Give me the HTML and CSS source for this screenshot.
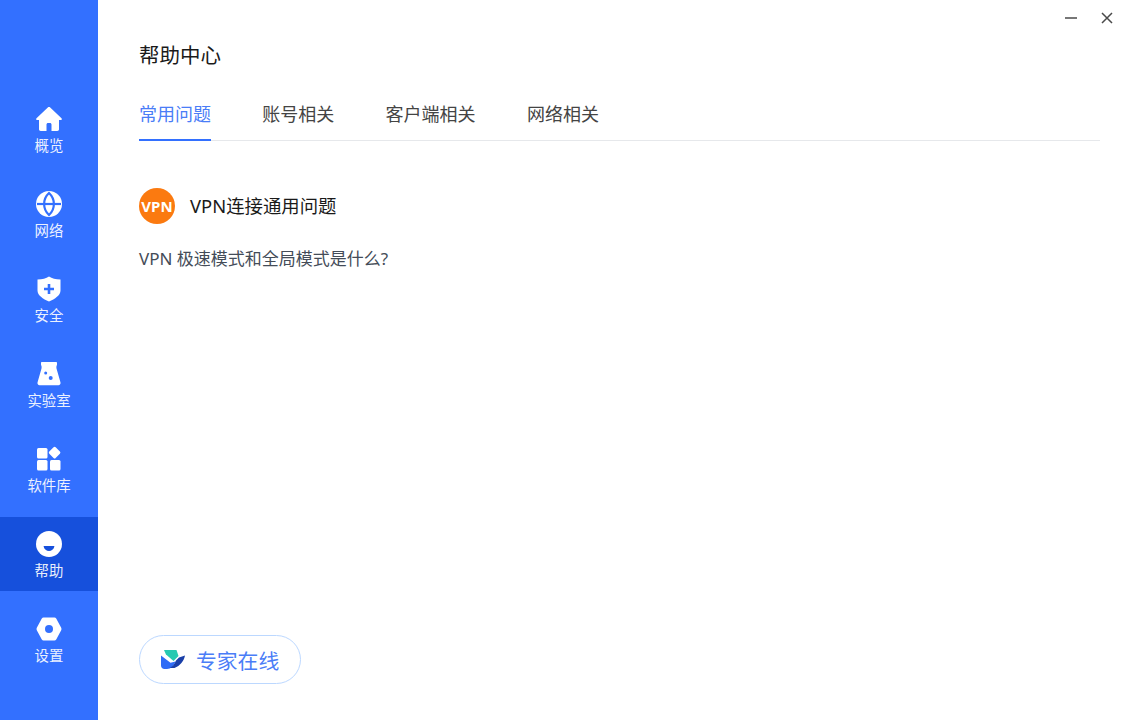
FILE: index.html
```html
<!DOCTYPE html>
<html lang="zh-CN">
<head>
<meta charset="utf-8">
<title>帮助中心</title>
<link rel="stylesheet" href="styles.css">
</head>
<body>
<div class="app">
  <nav class="sidebar">
    <a class="nav-item">
      <svg class="nav-icon" viewBox="0 0 26 26"><path d="M11.800 1.500c.7-.6 1.700-.6 2.400 0l11.300 10.700c.7.700.3 1.800-.7 1.800H23v9.300c0 1-.8 1.700-1.700 1.700H15.500v-6.500c0-.8-.7-1.500-1.500-1.500h-2c-.8 0-1.500.7-1.500 1.500V25H4.700C3.800 25 3 24.300 3 23.300V14H1.200c-1 0-1.400-1.100-.7-1.800z"/></svg>
      <span>概览</span>
    </a>
    <a class="nav-item">
      <svg class="nav-icon" viewBox="0 0 26 26"><circle cx="13" cy="13" r="13"/><g class="cut-stroke"><path d="M1 13h24"/><path d="M13 2C6.500 8 6.500 18 13 24C19.500 18 19.500 8 13 2z"/></g></svg>
      <span>网络</span>
    </a>
    <a class="nav-item">
      <svg class="nav-icon" viewBox="0 0 26 26"><path d="M13 .5C16 2.500 19.500 3.300 24.500 3.500v11c0 4.800-5.500 8.500-11.500 11-6-2.500-11.500-6.200-11.500-11v-11C6.500 3.300 10 2.500 13 .5z"/><path class="cut-fill" d="M11.700 8h2.600v3.700H18v2.600h-3.700V18h-2.600v-3.700H8v-2.600h3.700z"/></svg>
      <span>安全</span>
    </a>
    <a class="nav-item">
      <svg class="nav-icon" viewBox="0 0 26 26"><path d="M6 1h14c.6 0 1 .4 1 1v1.500c0 .5-.2.900-.4 1.200-.3.700-.3 1.600-.1 2.700L24.500 21.500c.3 1.400-.6 2.700-2 2.700H3.500c-1.400 0-2.300-1.300-2-2.700L5.500 7.400c.2-1.100.2-2-.1-2.700C5.200 4.400 5 4 5 3.500V2c0-.6.400-1 1-1z"/><circle class="cut-fill" cx="9.700" cy="12" r="1.500"/><circle class="cut-fill" cx="14.700" cy="17" r="2"/></svg>
      <span>实验室</span>
    </a>
    <a class="nav-item">
      <svg class="nav-icon" viewBox="0 0 26 26"><rect x="1" y="2" width="10.500" height="10.500" rx="1.500"/><rect x="1" y="14" width="10.500" height="10.500" rx="1.500"/><rect x="14" y="14" width="10.500" height="10.500" rx="1.500"/><rect x="14.100" y="2.100" width="9" height="9" rx="1.500" transform="rotate(45 18.600 6.600)"/></svg>
      <span>软件库</span>
    </a>
    <a class="nav-item active">
      <svg class="nav-icon" viewBox="0 0 26 26"><circle cx="13" cy="13" r="13"/><path class="cut-active" d="M8 15h10c.3 0 .5.200.4.500C17.700 18.300 15.500 20 13 20s-4.700-1.700-5.400-4.500c-.1-.3.100-.5.400-.5z"/></svg>
      <span>帮助</span>
    </a>
    <a class="nav-item">
      <svg class="nav-icon" viewBox="0 0 26 26"><path d="M7.500 1.500h11c.7 0 1.300.4 1.700 1l5 9.200c.4.800.4 1.700 0 2.600l-5 9.200c-.4.600-1 1-1.700 1h-11c-.7 0-1.300-.4-1.700-1l-5-9.200c-.4-.9-.4-1.800 0-2.600l5-9.200c.4-.6 1-1 1.700-1z"/><circle class="cut-fill" cx="13" cy="13" r="4"/></svg>
      <span>设置</span>
    </a>
  </nav>

  <main class="content">
    <div class="window-controls">
      <svg class="win-icon" viewBox="0 0 12 12"><path d="M0 6h12"/></svg>
      <svg class="win-icon" viewBox="0 0 12 12"><path d="M1 1l10 10M11 1 1 11"/></svg>
    </div>
    <h1 class="page-title">帮助中心</h1>
    <div class="tabs">
      <a class="tab active">常用问题</a>
      <a class="tab">账号相关</a>
      <a class="tab">客户端相关</a>
      <a class="tab">网络相关</a>
    </div>
    <section class="faq">
      <div class="faq-head">
        <span class="vpn-badge">VPN</span>
        <h2 class="faq-title">VPN连接通用问题</h2>
      </div>
      <p class="faq-question">VPN 极速模式和全局模式是什么?</p>
    </section>
    <div class="spacer"></div>
    <a class="expert-btn">
      <svg class="expert-logo" viewBox="0 0 24 19">
        <path fill="#26c9b2" d="M3 0h12.500L17.500 6 12.500 11 5 4.500z"/>
        <path fill="#2f6cf6" d="M0 5.500l9.500 7.300 5-1.300C13 15.800 10 19 6 19H3.500C1.500 19 0 17.500 0 15.500z"/>
        <path fill="#1a3fa8" d="M24 5.500C23 11 19 16 13.500 18H8.500c3-1.300 5.200-3.700 6.500-7.500L18 7.500z"/>
      </svg>
      <span>专家在线</span>
    </a>
  </main>
</div>
</body>
</html>
```
FILE: styles.css
```css
* {
  box-sizing: border-box;
}

html,
body {
  margin: 0;
  height: 100%;
  background: #fff;
  font-family: "Noto Sans", "Noto Sans CJK SC", sans-serif;
}

.app {
  display: flex;
  height: 720px;
  overflow: hidden;
}

.sidebar {
  width: 98px;
  flex: none;
  background: #3370ff;
  display: flex;
  flex-direction: column;
  gap: 11px;
  padding-top: 92px;
}

.nav-item {
  height: 74px;
  display: flex;
  flex-direction: column;
  align-items: center;
  padding-top: 14px;
  color: #fff;
  font-size: 14.400px;
  line-height: 20px;
}

.nav-item span {
  opacity: .9;
  margin-top: 4px;
}

.nav-item.active {
  background: #1650dc;
}

.nav-icon {
  width: 26px;
  height: 26px;
  display: block;
  fill: #fff;
}

.cut-fill {
  fill: #3370ff;
}

.cut-active {
  fill: #1650dc;
}

.cut-stroke path {
  fill: none;
  stroke: #3370ff;
  stroke-width: 2.200;
}

.content {
  flex: 1;
  position: relative;
  display: flex;
  flex-direction: column;
  padding: 0 41px 36px;
  min-width: 0;
}

.window-controls {
  position: absolute;
  top: 12px;
  right: 28px;
  display: flex;
  gap: 24px;
}

.win-icon {
  width: 12px;
  height: 12px;
  display: block;
  fill: none;
  stroke: #4a4a4a;
  stroke-width: 1.500;
}

.page-title {
  margin: 40px 0 0;
  font-size: 20.500px;
  line-height: 30px;
  font-weight: 400;
  color: #1a1a1a;
}

.tabs {
  display: flex;
  gap: 51.300px;
  margin-top: 17px;
  border-bottom: 1px solid #e6e8eb;
}

.tab {
  height: 54px;
  padding-top: 14px;
  font-size: 18px;
  line-height: 26px;
  color: #444;
  margin-bottom: -1px;
}

.tab.active {
  color: #4a7df7;
  border-bottom: 2px solid #3370ff;
}

.faq {
  margin-top: 47px;
}

.faq-head {
  display: flex;
  align-items: center;
  gap: 15px;
}

.vpn-badge {
  width: 36px;
  height: 36px;
  border-radius: 50%;
  background: #fb7a10;
  color: #fff;
  font-weight: 700;
  font-size: 15px;
  text-align: center;
  line-height: 36px;
}

.faq-title {
  margin: 0;
  font-size: 18.400px;
  font-weight: 400;
  color: #1a1a1a;
  line-height: 26px;
}

.faq-question {
  margin: 23px 0 0;
  font-size: 17px;
  line-height: 24px;
  color: #444c58;
}

.spacer {
  flex: 1;
}

.expert-btn {
  width: 162px;
  height: 49px;
  border: 1.500px solid #bcd8ff;
  border-radius: 25px;
  display: flex;
  align-items: center;
  gap: 11px;
  padding-left: 21px;
  color: #4a7df7;
  font-size: 20.800px;
}

.expert-logo {
  width: 24px;
  height: 19px;
  display: block;
  flex: none;
}
```
